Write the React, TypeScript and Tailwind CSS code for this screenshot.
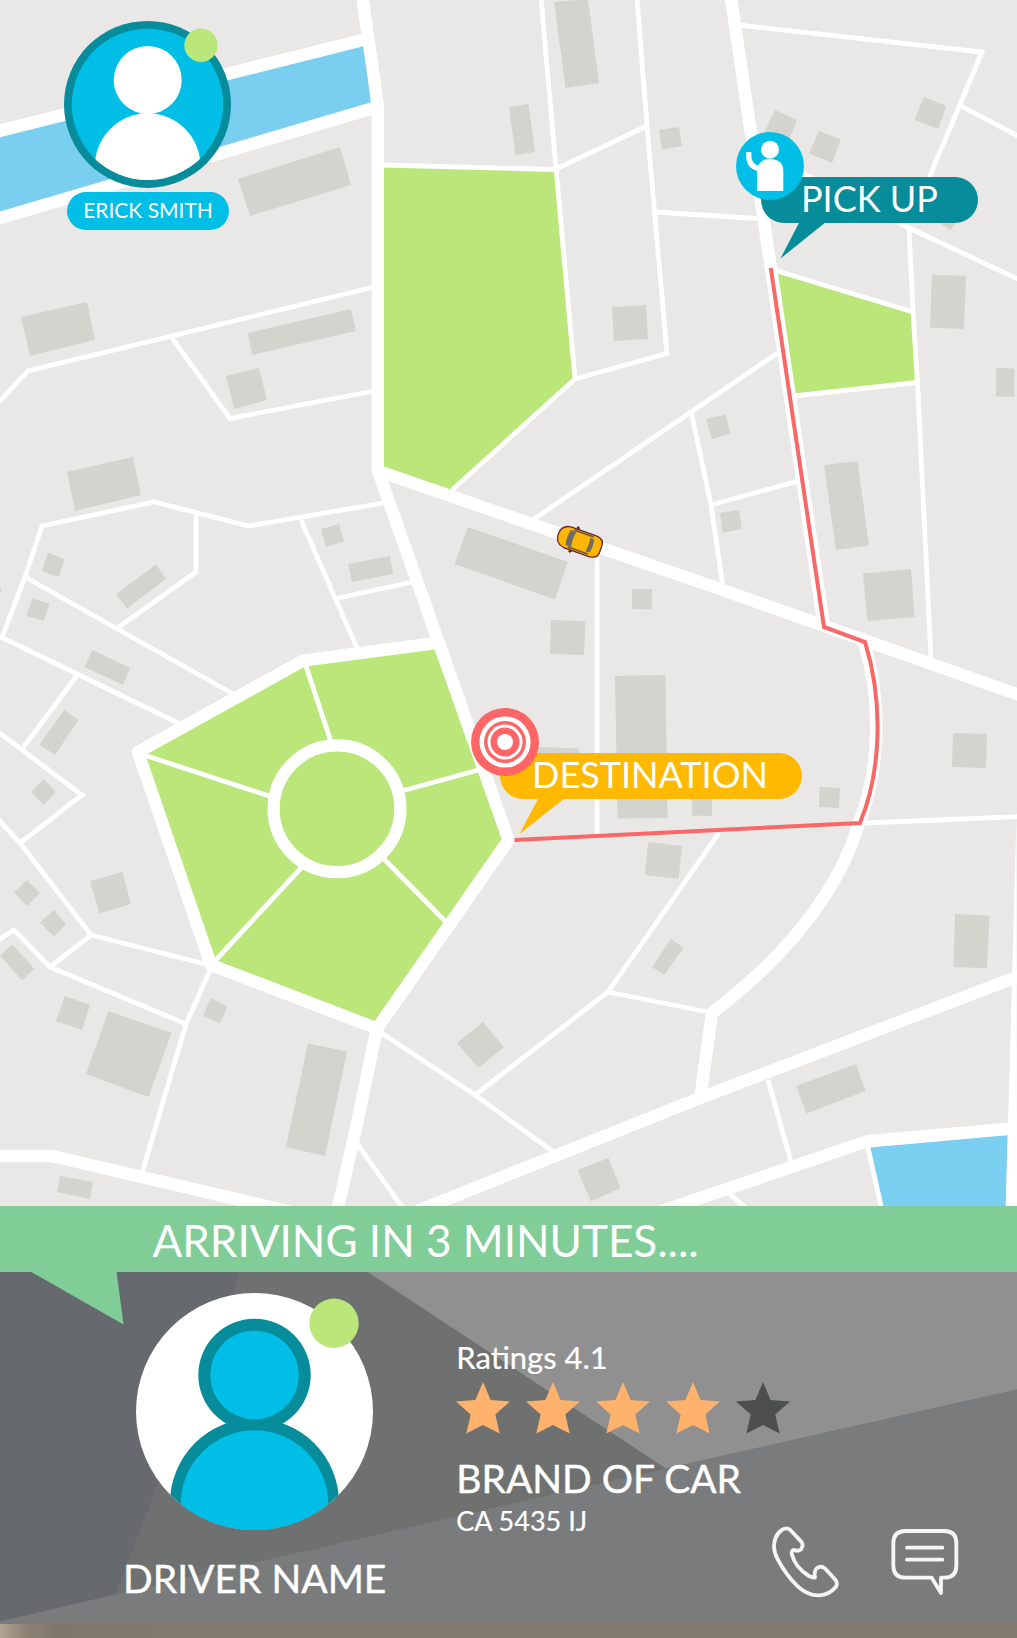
import React from "react";

const BUILDINGS = [
  "238,179 340,147 351,185 250,216",
  "21,317 87,302 95,340 30,356",
  "248,333 351,309 356,331 252,355",
  "226,376 259,368 267,400 234,409",
  "554,2 588,-1 599,83 565.5,88",
  "509,107 528.5,104 535,152 515.5,155",
  "659,130 679,127 682,146 662,149.5",
  "612,307 646,305 648,339 614,341",
  "775,110 797,120 788,143 764,133",
  "819,131 841,139.5 832,163 809,153.5",
  "924,97 946.5,106 938,129 914.5,120",
  "930,217 960,217 950.5,230",
  "932,275 966,276 964,329 930,327.5",
  "996,368 1014.5,368.5 1014,397 996,396.5",
  "706,419 725.5,414.5 730.5,433.5 712,439",
  "720,513 739,510 742,529 722.5,533",
  "824,465 857.5,461 869,545.5 836,550",
  "863,573.5 911,569 914.5,617 867.5,621",
  "953,733 987,734 986,768 952,767",
  "819.5,787 840,788 839,808 819,807",
  "692,790 712,790 712,816 692,815.5",
  "67,472 133,457 141,495 75,511",
  "48,552.5 65,559.5 58.5,577 41.5,571",
  "116,594 156,564.5 166,579 127,608.5",
  "33,598 49.5,604 43.5,621 26,615.5",
  "92.5,650 130,668 123,685 84.5,667",
  "64,710 78.5,720 55,755 39.5,744.5",
  "43.5,779 56,792 43.5,805 31,792",
  "0,588 1.5,589 0,593",
  "321,529 339,524 344,541.5 326,547",
  "348,564 390,556 393,574 352,582",
  "468,527 568,562 555,599.5 454.5,564",
  "551,620 585.5,621 584,655 550,654",
  "632,589 652,589 652,609.5 632,609",
  "615,676 665.5,675 667.5,818 617.5,818.5",
  "535,747 579,748.5 579,760 535,760",
  "27,880 40,893 27,906 14,892.5",
  "54,910 66,924 54,936.5 40,922.5",
  "90,881 122.5,872 131,904 99.5,913.5",
  "12.5,944.5 34.5,969 22,980.5 0,955.5",
  "65,996 90,1005 82,1030 56,1021",
  "108.5,1011 171.5,1033 148.5,1097 86,1074",
  "210.5,998 227.5,1007 220,1023.5 203,1016",
  "308,1043.5 347,1051.5 325,1156 286,1147",
  "60,1176 93,1182 90,1199 57,1192",
  "648,842 682,846 678.5,879 645,875",
  "671,939 683.5,948 664,975 652,967",
  "483,1022 504,1047 478.5,1068 457,1043",
  "577.5,1170 608.5,1158 620.5,1188 591,1201.5",
  "955,914 989.5,915.5 987,968 953.5,967",
  "796,1086 856,1064 865.5,1091 806.5,1113.5",
];

const LANES = [
  "-4,405 28,371 374,287",
  "172,338 230,418.500 374,391",
  "541,-2 556,168 575,379 452,490",
  "637,-2 647,126 667,353.5 575,379",
  "556,169 647,126",
  "382,165 556,169.5",
  "656,212 757,218.5",
  "738,25 982,52 929,178",
  "961,106 1020,137",
  "800,172 909,228 1020,280",
  "909,227 913,312 918,392 931,660",
  "774,270 913,312",
  "794,396 917,382.5",
  "534,519 779,352",
  "691,411 711,505 723,587",
  "711,505 798,481",
  "25,577 235,695",
  "180,724 2,637.5 25,577 42,526 154,502 249,526 386,502.5",
  "196,513 196,572 119,627",
  "301,520 357,648",
  "338,598 413,582",
  "78,674 23,748",
  "-3,731 82,795 20,843",
  "-3,818 20,843 91,935 213,966",
  "-3,941 14,930 50,967 186,1024",
  "50,967 91,935",
  "211,968 186,1024 142,1173",
  "305,663 331,742",
  "138,753 272,797",
  "482,769 402,791",
  "382,857 448,924",
  "213,963 302,867",
  "377,1030 475,1095 555,1153",
  "475,1095 608,992 719,833",
  "608,992 713,1013",
  "356,1142 404,1210",
  "597,550 597,836",
  "866,823 1020,816.5",
  "768,1080 791,1162",
  "867.5,1146 882,1210",
  "730,1194 748,1210",
];

const ROADS = [
  "M-5 132 L367 39",
  "M-5 219.5 L374 108",
  "M362 -5 L377.8 105 V470 L508.5 840 L377 1028.500 L211 965 L138 752 L303 660.7 L436 643",
  "M730.500 -5 L824 627",
  "M378 471 L720 589 L1022 696",
  "M864 642 C882 700 880 770 859 823 C841 884 798 947 712 1013 L700 1100",
  "M-5 1156 H52 L300 1214",
  "M377 1028 L355 1133 L337 1212",
  "M415 1212 L700 1098 L1014 978 L1025 974",
  "M640 1218.500 L866.500 1141.500 L1012 1128.500",
];

function CityMap() {
  return (
    <svg viewBox="0 0 1017 1206" width="1017" height="1206" className="block">
      <rect width="1017" height="1206" fill="#e9e8e7" />
      <g fill="#7acff0">
        <polygon points="0,136 364,44 371,104 0,214" />
        <polygon points="870,1146 1008,1132 1006,1206 883,1206" />
      </g>
      <g fill="#bae67a">
        <polygon points="384,166 555,170 574,379 452,490 382,466" />
        <polygon points="777,272 912,312 915.5,381 795,395" />
        <polygon points="303,661 436,643 508,840 377,1028 211,965 138,752" />
      </g>
      <g fill="#d5d3cd">
        {BUILDINGS.map((points) => (
          <polygon key={points} points={points} />
        ))}
      </g>
      <g fill="none" stroke="#fff" strokeWidth="4.8">
        {LANES.map((points) => (
          <polyline key={points} points={points} />
        ))}
      </g>
      <g fill="none" stroke="#fff" strokeWidth="12.4" strokeLinejoin="round">
        {ROADS.map((d) => (
          <path key={d} d={d} />
        ))}
      </g>
      <polygon points="1016.5,815 1012.3,972 1008,1122 1005.7,1206 1017,1206" fill="#fff" />
      <circle cx="337" cy="808.8" r="63.4" fill="#bae67a" stroke="#fff" strokeWidth="12.2" />
      <path
        d="M770.8 268 L824 627 L865 642 C883 700 882 770 860 823 L514.500 840"
        fill="none"
        stroke="#f96767"
        strokeWidth="4"
      />
      <g transform="translate(579.5 541.5) rotate(19.500)">
        <path d="M-6.500 -13.500 L-4 -10 M-6.500 13.500 L-4 10" stroke="#4a1a35" strokeWidth="2.4" />
        <path
          d="M-13 -11 H14 Q22.500 -10.500 22.500 -4 V4 Q22.500 10.500 14 11 H-13 Q-22.500 9.500 -22.500 0 Q-22.500 -9.500 -13 -11Z"
          fill="#fdb605"
          stroke="#6b2335"
          strokeWidth="1.3"
        />
        <path d="M-9 -9 H12 M-9 9 H12" stroke="#6a5a35" strokeWidth="1.800" />
        <path d="M-12 -8 Q-7.500 -8.500 -6 -7.500 Q-8 0 -6 7.500 Q-7.500 8.500 -12 8 Q-14 0 -12 -8Z" fill="#716d65" />
        <path d="M9 -7 Q11 -8 13.500 -6.500 Q14.500 0 13.500 6.500 Q11 8 9 7 Q10.500 0 9 -7Z" fill="#716d65" />
      </g>
    </svg>
  );
}

function RiderBadge() {
  return (
    <div className="absolute left-[64px] top-[20px] flex w-[168px] flex-col items-center">
      <svg viewBox="0 0 168 168" className="block h-[168px] w-[168px] overflow-visible">
        <defs>
          <clipPath id="rider-clip">
            <circle cx="83.5" cy="84.4" r="75.7" />
          </clipPath>
        </defs>
        <circle cx="83.5" cy="84.4" r="83.5" fill="#068c9b" />
        <circle cx="83.5" cy="84.4" r="75.7" fill="#00bee5" />
        <circle cx="83.7" cy="60" r="34" fill="#fff" />
        <circle cx="83.7" cy="146" r="52.7" fill="#fff" clipPath="url(#rider-clip)" />
        <circle cx="137" cy="25.3" r="16.7" fill="#bae67a" />
      </svg>
      <div className="mt-1 flex h-[37.5px] w-[162px] items-center justify-center rounded-full bg-[#00bee5] pb-[3px]">
        <span className="whitespace-nowrap text-[21px] leading-none text-white">ERICK SMITH</span>
      </div>
    </div>
  );
}

function PickUpMarker() {
  return (
    <div className="absolute left-[736px] top-[132px] h-[127px] w-[242px]">
      <svg viewBox="0 0 90 37" className="absolute left-[44px] top-[90px] block h-[37px] w-[90px]">
        <path d="M19.500 0 H46 L0.500 36.500Z" fill="#068c9b" />
      </svg>
      <div className="absolute left-[25px] top-[45px] flex h-[46px] w-[217px] items-center rounded-full bg-[#068c9b] pb-[5px] pl-[40px]">
        <span className="whitespace-nowrap text-[36px] leading-none text-white">PICK UP</span>
      </div>
      <svg viewBox="0 0 68 68" className="absolute left-0 top-0 block h-[68px] w-[68px]">
        <circle cx="34" cy="34" r="34" fill="#00bee5" />
        <circle cx="34" cy="17.700" r="9" fill="#fff" />
        <path d="M21 59 V38 Q23 28 31 27.300 H37 Q47 29 47.300 38 V59Z" fill="#fff" />
        <path d="M12.800 20 V25 Q13.500 35 23 36.500" fill="none" stroke="#fff" strokeWidth="5.2" />
      </svg>
    </div>
  );
}

function DestinationMarker() {
  return (
    <div className="absolute left-[471px] top-[708px] h-[127px] w-[331px]">
      <svg viewBox="0 0 90 37" className="absolute left-[48px] top-[90px] block h-[37px] w-[90px]">
        <path d="M19.500 0 H46 L0.500 36Z" fill="#ffb900" />
      </svg>
      <div className="absolute left-[29px] top-[45px] flex h-[46px] w-[301.5px] items-center rounded-full bg-[#ffb900] pb-[5px] pl-[32px]">
        <span className="whitespace-nowrap text-[36px] leading-none text-white">DESTINATION</span>
      </div>
      <svg viewBox="0 0 68 68" className="absolute left-0 top-0 block h-[68px] w-[68px]">
        <circle cx="34" cy="34" r="34" fill="#fd6566" />
        <circle cx="34" cy="34" r="25.6" fill="#fff" />
        <circle cx="34" cy="34" r="21" fill="#fd6566" />
        <circle cx="34" cy="34" r="17.500" fill="#fff" />
        <circle cx="34" cy="34" r="14.500" fill="#fd6566" />
        <circle cx="34" cy="34" r="8" fill="#fff" />
      </svg>
    </div>
  );
}

function DriverAvatar() {
  return (
    <svg viewBox="0 0 237 237" className="block h-[237px] w-[237px] overflow-visible">
      <defs>
        <clipPath id="driver-clip">
          <circle cx="118.500" cy="118.500" r="118.500" />
        </clipPath>
      </defs>
      <circle cx="118.500" cy="118.500" r="118.500" fill="#fff" />
      <g clipPath="url(#driver-clip)">
        <path d="M34 237 V210 A84.500 84.500 0 0 1 203 210 V237Z" fill="#068c9b" />
        <circle cx="118.500" cy="82" r="56.2" fill="#068c9b" />
        <circle cx="118.500" cy="82" r="44.300" fill="#00bee5" />
        <path d="M44.800 237 V211 A73.700 73.700 0 0 1 192.200 211 V237Z" fill="#00bee5" />
      </g>
      <circle cx="198" cy="30.300" r="24.700" fill="#bae67a" />
    </svg>
  );
}

function Star({ filled }: { filled: boolean }) {
  return (
    <svg viewBox="-27 -28.400 54 51.400" className="block h-[51.4px] w-[54px]">
      <polygon
        points="0,-28.4 7.6,-10.5 27,-8.8 12.3,4 16.7,23 0,14.5 -16.7,23 -12.3,4 -27,-8.8 -7.600,-10.500"
        fill={filled ? "#ffb26b" : "#4c4e50"}
      />
    </svg>
  );
}

export default function App() {
  return (
    <div className="flex h-[1638px] w-[1017px] flex-col overflow-hidden bg-[#797b7d] font-['Lato',sans-serif] text-white">
      <section className="relative h-[1206px] shrink-0">
        <CityMap />
        <RiderBadge />
        <PickUpMarker />
        <DestinationMarker />
      </section>

      <section className="relative z-10 flex h-[65.5px] shrink-0 items-center bg-[#80cd98] pl-[152.5px] pt-[2px]">
        <span className="whitespace-nowrap text-[44px] leading-none">ARRIVING IN 3 MINUTES....</span>
        <svg viewBox="0 0 94 54" className="absolute left-[29.5px] top-[65px] block h-[54px] w-[94px]">
          <path d="M0 0 H86.500 L93.500 53.500 L0.500 0.500Z" fill="#80cd98" />
        </svg>
      </section>

      <section className="relative h-[352.5px] shrink-0">
        <svg viewBox="0 1271.500 1017 352.500" className="absolute inset-0 block h-full w-full">
          <rect y="1271" width="1017" height="353" fill="#6f7170" />
          <polygon points="0,1271 241,1271 115,1594 0,1621" fill="#66696e" />
          <polygon points="367,1271 1017,1271 1017,1389 666,1468" fill="#909090" />
          <polygon points="0,1621 115,1594 400,1529 666,1468 1017,1389 1017,1624 0,1624" fill="#797b7d" />
        </svg>
        <div className="relative flex h-full">
          <div className="flex w-[400px] flex-col items-center pl-[109.5px] pt-[21.7px]">
            <DriverAvatar />
            <span className="mt-[29px] whitespace-nowrap text-[39px] leading-none [-webkit-text-stroke:0.4px_white]">
              DRIVER NAME
            </span>
          </div>
          <div className="flex flex-col items-start pl-[56.3px] pt-[70.5px]">
            <span className="whitespace-nowrap text-[31px] leading-none [-webkit-text-stroke:0.2px_white]">Ratings 4.1</span>
            <div className="mt-[9.3px] flex gap-4">
              <Star filled />
              <Star filled />
              <Star filled />
              <Star filled />
              <Star filled={false} />
            </div>
            <span className="mt-[25px] whitespace-nowrap text-[39px] leading-none [-webkit-text-stroke:0.4px_white]">
              BRAND OF CAR
            </span>
            <span className="mt-[9px] whitespace-nowrap text-[27px] leading-none [-webkit-text-stroke:0.2px_white]">
              CA 5435 IJ
            </span>
          </div>
        </div>
        <div className="absolute bottom-[25px] right-[57px] flex items-end gap-[50px]">
          <svg
            viewBox="93 135 207 222"
            className="block h-[74px] w-[69px]"
            fill="none"
            stroke="#f4f5f5"
            strokeWidth="11.500"
            strokeLinejoin="round"
          >
            <path d="M127 149 Q140 141 151 150 L183 184 Q192 194 184 207 Q176 216 163 210 Q153 210 156 224 Q165 262 207 288 Q219 294 225 292 Q222 276 228 267 Q240 254 256 266 L286 299 Q294 310 288 320 Q268 344 238 346 Q205 348 174 320 Q139 287 112 236 Q95 202 107 173 Q113 158 127 149Z" />
          </svg>
          <svg
            viewBox="450 135 210 222"
            className="block h-[74px] w-[70px]"
            fill="none"
            stroke="#f4f5f5"
            strokeWidth="11.500"
            strokeLinejoin="round"
            strokeLinecap="round"
          >
            <path d="M497 153 H613 Q649 153 649 190 V257 Q649 293 613 293 H603 V339 L575 293 H497 Q460 293 460 257 V190 Q460 153 497 153Z" />
            <path d="M501 203 H607 M501 239 H607" />
          </svg>
        </div>
      </section>

      <footer className="h-3.5 shrink-0 bg-[linear-gradient(90deg,#b0a596_0px,#8d8274_25px,#7f756a_60px,#857a6e_200px)]" />
    </div>
  );
}
